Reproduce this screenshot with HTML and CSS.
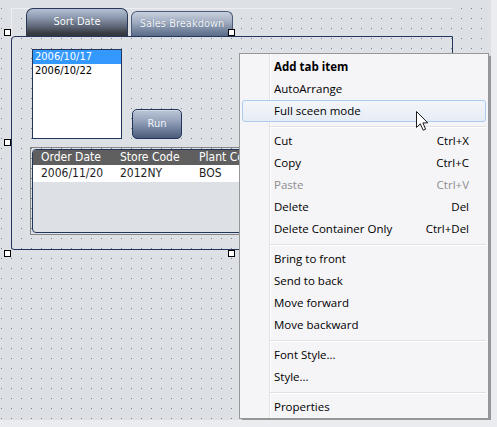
FILE: index.html
```html
<!DOCTYPE html>
<html>
<head>
<meta charset="utf-8">
<link rel="stylesheet" href="styles.css">
</head>
<body>
<div class="canvas">
  <div class="tabctl">
    <div class="tabstrip">
      <div class="tab active">Sort Date</div>
      <div class="tab">Sales Breakdown</div>
    </div>
    <div class="panel">
      <div class="toprow">
        <div class="listbox">
          <div class="li sel">2006/10/17</div>
          <div class="li">2006/10/22</div>
        </div>
        <div class="btn">Run</div>
      </div>
      <div class="gridwrap">
        <div class="grid">
          <div class="grow head">
            <div class="gc">Order Date</div>
            <div class="gc">Store Code</div>
            <div class="gc last">Plant Code</div>
          </div>
          <div class="grow data">
            <div class="gc">2006/11/20</div>
            <div class="gc">2012NY</div>
            <div class="gc last">BOS</div>
          </div>
        </div>
      </div>
    </div>
  </div>

  <div class="handle h-tl"></div>
  <div class="handle h-tr"></div>
  <div class="handle h-ml"></div>
  <div class="handle h-bl"></div>
  <div class="handle h-br"></div>

  <div class="menu">
    <div class="mi bold"><span>Add tab item</span></div>
    <div class="mi"><span>AutoArrange</span></div>
    <div class="mi hot"><span>Full sceen mode</span></div>
    <div class="sep"></div>
    <div class="mi"><span>Cut</span><span>Ctrl+X</span></div>
    <div class="mi"><span>Copy</span><span>Ctrl+C</span></div>
    <div class="mi dis"><span>Paste</span><span>Ctrl+V</span></div>
    <div class="mi"><span>Delete</span><span>Del</span></div>
    <div class="mi"><span>Delete Container Only</span><span>Ctrl+Del</span></div>
    <div class="sep"></div>
    <div class="mi"><span>Bring to front</span></div>
    <div class="mi"><span>Send to back</span></div>
    <div class="mi"><span>Move forward</span></div>
    <div class="mi"><span>Move backward</span></div>
    <div class="sep"></div>
    <div class="mi"><span>Font Style...</span></div>
    <div class="mi"><span>Style...</span></div>
    <div class="sep"></div>
    <div class="mi"><span>Properties</span></div>
  </div>

  <svg class="cursor" width="14" height="21" viewBox="0 0 14 21">
    <path d="M0.5 0.5 V16.5 L4.3 12.8 L7.2 19.2 L9.6 18.2 L6.9 11.9 H11.8 Z" fill="#ffffff" stroke="#1a1a1a" stroke-width="1" stroke-linejoin="miter"/>
  </svg>
</div>
</body>
</html>
```
FILE: styles.css
```css
html, body {
  margin: 0;
  padding: 0;
  background: #eaecef;
}

.canvas {
  position: relative;
  width: 491px;
  height: 420px;
  box-sizing: border-box;
  padding: 8px 0 0 11px;
  background-color: #dde1e5;
  background-image: conic-gradient(from 270deg at 1px 1px, #7b7f86 90deg, transparent 90deg);
  background-size: 10px 10px;
  background-position: 1px 8px;
  font-family: "DejaVu Sans Condensed", "DejaVu Sans", sans-serif;
  font-size: 11px;
  overflow: hidden;
}

.tabctl {
  width: 442px;
}

.tabstrip {
  height: 28px;
  display: flex;
  align-items: flex-end;
  gap: 3px;
  padding-left: 15px;
  background:
    linear-gradient(#eceef1, #eceef1) left top / 100% 1px no-repeat,
    linear-gradient(#eceef1, #eceef1) left top / 1px 100% no-repeat;
}

.tab {
  width: 102px;
  height: 25px;
  box-sizing: border-box;
  border: 1px solid #4a5a78;
  border-bottom: none;
  border-radius: 6px 6px 0 0;
  background: linear-gradient(#c8d0dd 0%, #a3afc3 40%, #76869f 75%, #5a6b89 100%);
  color: #f4f7fb;
  text-align: center;
  line-height: 14px;
  padding-top: 5px;
  text-shadow: 0 0 1px rgba(40, 55, 80, 0.5);
}

.tab.active {
  height: 28px;
  border-color: #283856;
  border-radius: 7px 7px 0 0;
  background: linear-gradient(#b3bfd3 0%, #8f9bb0 30%, #5e6677 65%, #3b3e45 88%, #33363c 100%);
  color: #ffffff;
  padding-top: 6px;
}

.panel {
  height: 214px;
  box-sizing: border-box;
  border: 1px solid #22355a;
  border-radius: 4px 0 0 3px;
}

.toprow {
  display: flex;
  align-items: flex-end;
  gap: 10px;
  margin: 12px 0 0 20px;
}

.listbox {
  width: 90px;
  height: 90px;
  box-sizing: border-box;
  border: 1px solid #22355a;
  background: #ffffff;
}

.li {
  height: 14px;
  line-height: 14px;
  padding-left: 2px;
  color: #000000;
}

.li.sel {
  background: #3399ff;
  color: #ffffff;
}

.btn {
  width: 50px;
  height: 30px;
  box-sizing: border-box;
  border: 1px solid #22355a;
  border-radius: 5px;
  background: linear-gradient(#bcc6d8 0%, #9aa7be 35%, #6e7f9c 70%, #4b5a78 100%);
  color: #eef3fa;
  text-align: center;
  line-height: 28px;
  box-shadow: inset 0 1px 0 rgba(255, 255, 255, 0.35);
}

.gridwrap {
  margin: 8px 0 0 18px;
  width: 418px;
  height: 88px;
  box-sizing: border-box;
  border: 1px solid #858585;
  padding: 1px;
}

.grid {
  height: 84px;
  box-sizing: border-box;
  border: 1px solid #22355a;
  border-radius: 4px 0 0 4px;
  background: #dde1e5;
  overflow: hidden;
  font-size: 12px;
}

.grow {
  display: flex;
}

.grow.head {
  height: 15px;
  line-height: 15px;
  background: #5f5f5f;
  color: #ffffff;
}

.grow.data {
  height: 17px;
  line-height: 17px;
  background: #ffffff;
  color: #1e1e1e;
}

.gc {
  width: 79px;
  box-sizing: border-box;
  padding-left: 8px;
  white-space: nowrap;
  overflow: hidden;
}

.gc.last {
  width: 120px;
}

.handle {
  position: absolute;
  width: 7px;
  height: 7px;
  box-sizing: border-box;
  border: 1px solid #000000;
  background: #ffffff;
}

.h-tl { left: 4px; top: 29px; }
.h-tr { left: 228px; top: 29px; }
.h-ml { left: 4px; top: 139px; }
.h-bl { left: 4px; top: 250px; }
.h-br { left: 228px; top: 250px; }

.menu {
  position: absolute;
  left: 239px;
  top: 53px;
  width: 250px;
  height: 366px;
  box-sizing: border-box;
  border: 1px solid #979797;
  padding: 2px 2px 0 2px;
  background-color: #f5f4f7;
  background-image: linear-gradient(to right, transparent 29px, #e2e2e4 29px, #e2e2e4 30px, #ffffff 30px, #ffffff 31px, transparent 31px);
  box-shadow: 3px 3px 1px rgba(60, 60, 60, 0.45);
  font-family: "Open Sans", "Noto Sans", sans-serif;
  font-size: 11.5px;
  color: #000000;
}

.mi {
  display: flex;
  justify-content: space-between;
  height: 22px;
  line-height: 21px;
  box-sizing: border-box;
  padding: 0 17px 0 32px;
  white-space: nowrap;
}

.mi.bold {
  font-weight: bold;
}

.mi.dis {
  color: #8d8d8d;
}

.mi.hot {
  border: 1px solid #aecbee;
  border-radius: 3px;
  padding: 0 16px 0 31px;
  line-height: 19px;
  background: linear-gradient(#f3f6fb, #e6ecf5);
}

.sep {
  height: 8px;
  margin-left: 28px;
  background: linear-gradient(to bottom, transparent 4px, #e0e0e2 4px, #e0e0e2 5px, #ffffff 5px, #ffffff 6px, transparent 6px);
}

.cursor {
  position: absolute;
  left: 416px;
  top: 111px;
}
```
